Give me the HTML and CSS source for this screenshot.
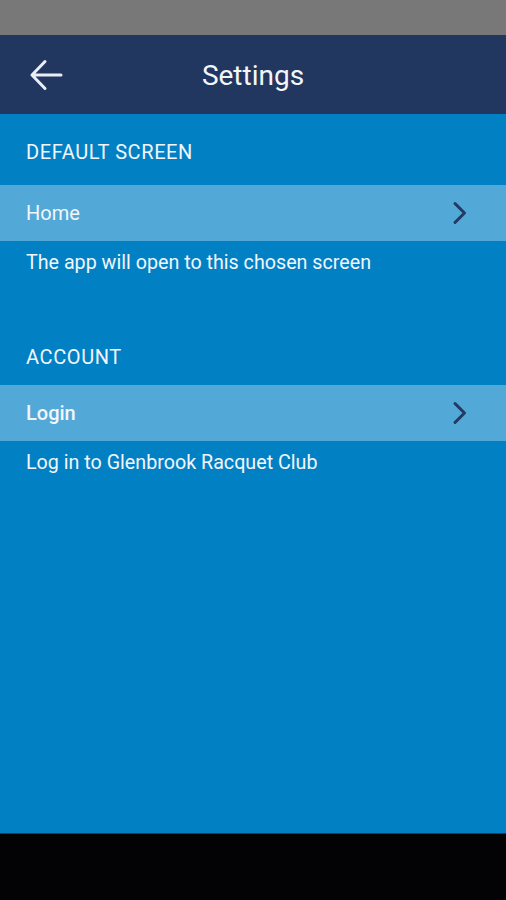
FILE: index.html
```html
<!DOCTYPE html>
<html>
<head>
    <title>Settings</title>
    <meta name="viewport" content="width=device-width, initial-scale=1">
    <link rel="stylesheet" href="styles.css">
</head>
<body>
    <div class="status-bar"></div>

    <div class="toolbar">
        <svg class="back" width="34" height="32" viewBox="0 0 34 32">
            <path d="M32 16H3.5 M16 2.5L3 16l13 13.5" fill="none" stroke="#e9eef5" stroke-width="3" stroke-linecap="round" stroke-linejoin="round"/>
        </svg>
        <h1>Settings</h1>
    </div>

    <div class="content">
        <div class="section">
            <div class="section-title">DEFAULT SCREEN</div>
            <div class="row">
                <span>Home</span>
                <svg class="chevron" width="16" height="24" viewBox="0 0 16 24">
                    <path d="M3 2.5l9.5 9.5L3 21.5" fill="none" stroke="#233a63" stroke-width="3" stroke-linecap="round" stroke-linejoin="round"/>
                </svg>
            </div>
            <div class="desc">The app will open to this chosen screen</div>
        </div>

        <div class="section">
            <div class="section-title">ACCOUNT</div>
            <div class="row">
                <span class="strong">Login</span>
                <svg class="chevron" width="16" height="24" viewBox="0 0 16 24">
                    <path d="M3 2.5l9.5 9.5L3 21.5" fill="none" stroke="#233a63" stroke-width="3" stroke-linecap="round" stroke-linejoin="round"/>
                </svg>
            </div>
            <div class="desc">Log in to Glenbrook Racquet Club</div>
        </div>
    </div>

    <div class="nav-bar"></div>
</body>
</html>
```

FILE: styles.css
```css
body {
    margin: 0;
    width: 506px;
    height: 900px;
    display: flex;
    flex-direction: column;
    font-family: Roboto, "Liberation Sans", sans-serif;
    color: #f2f6fa;
    overflow: hidden;
}

.status-bar {
    height: 35px;
    background-color: #787878;
}

.toolbar {
    height: 79px;
    background-color: #22375f;
    display: flex;
    align-items: center;
    position: relative;
}

.toolbar .back {
    margin-left: 29px;
}

.toolbar h1 {
    position: absolute;
    left: 0;
    right: 0;
    margin: 0;
    padding-top: 2px;
    text-align: center;
    font-size: 28px;
    font-weight: normal;
    line-height: 32px;
    pointer-events: none;
}

.content {
    flex: 1;
    background-color: #0280c4;
}

.section-title {
    padding: 26px 26px 21px;
    font-size: 20px;
    line-height: 24px;
    letter-spacing: 0.6px;
}

.section + .section .section-title {
    padding-top: 26px;
    padding-bottom: 16px;
}

.row {
    height: 56px;
    padding: 0 38px 0 26px;
    background-color: #52a8d6;
    display: flex;
    align-items: center;
    justify-content: space-between;
    font-size: 20px;
}

.row .strong {
    font-weight: 500;
}

.desc {
    padding: 10px 26px 0;
    margin-bottom: 44px;
    font-size: 19.7px;
    line-height: 24px;
}

.nav-bar {
    height: 66px;
    background-color: #030205;
    border-top: 1px solid #123a5a;
}
```
